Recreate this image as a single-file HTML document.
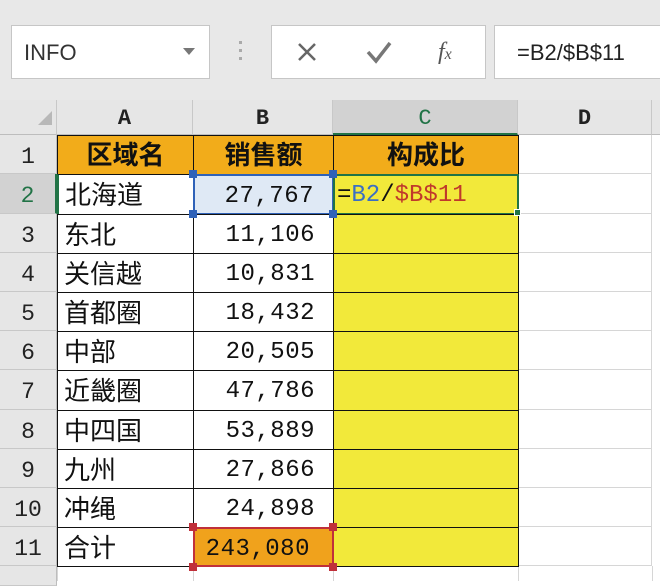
<!DOCTYPE html>
<html><head><meta charset="utf-8"><style>
*{margin:0;padding:0;box-sizing:border-box}
body{width:660px;height:581px;overflow:hidden;background:#fff;position:relative;font-family:"Liberation Sans","Noto Sans CJK SC",sans-serif}
.a{position:absolute}
.top{left:0;top:0;width:660px;height:100px;background:#e8e8e8}
.box{background:#fff;border:1px solid #c6c6c6}
.ch{top:100px;height:35px;background:#e6e6e6;border-right:1px solid #c8c8c8;border-bottom:1px solid #bdbdbd;font-family:"Liberation Mono",monospace;font-weight:bold;font-size:22px;text-align:center;line-height:38px;color:#222}
.rh{left:0;width:57px;background:#e6e6e6;border-bottom:1px solid #c8c8c8;border-right:1px solid #bdbdbd;font-family:"Liberation Mono",monospace;font-size:23px;text-align:center;color:#222}
.c{border:1.5px solid #111;font-size:26px;color:#111;white-space:nowrap;overflow:hidden}
.n{font-family:"Liberation Mono",monospace;font-size:24px;text-align:right;padding-right:18px;letter-spacing:0.5px}
.t{padding-left:6px;font-family:"Liberation Sans","Noto Sans CJK SC",sans-serif}
.g{border-right:1px solid #d6d6d6;border-bottom:1px solid #d6d6d6}
.h{width:8px;height:8px}
</style></head><body>
<div class="a top"></div>
<div class="a box" style="left:11px;top:25px;width:199px;height:54px;font-size:22px;line-height:54px;padding-left:12px;color:#333">INFO</div>
<div class="a" style="left:183px;top:48px;width:0;height:0;border-left:6px solid transparent;border-right:6px solid transparent;border-top:7px solid #777"></div>
<div class="a" style="left:239px;top:41px;width:3px;height:3px;background:#aaa;box-shadow:0 8px 0 #aaa,0 16px 0 #aaa"></div>
<div class="a box" style="left:271px;top:25px;width:215px;height:54px"></div>
<svg class="a" style="left:296px;top:41px" width="22" height="22"><path d="M3 3L19 19M19 3L3 19" stroke="#666" stroke-width="2.5"/></svg>
<svg class="a" style="left:365px;top:40px" width="28" height="24"><path d="M3 12L11 21L25 3" stroke="#777" stroke-width="3.5" fill="none"/></svg>
<div class="a" style="left:438px;top:30px;font-size:24px;color:#555;font-family:'Liberation Serif',serif;font-style:italic;line-height:44px">f<span style="font-size:16px">x</span></div>
<div class="a box" style="left:494px;top:25px;width:170px;height:54px;font-size:22px;line-height:54px;padding-left:22px;color:#222">=B2/$B$11</div>

<div class="a" style="left:0;top:100px;width:57px;height:35px;background:#e6e6e6;border-right:1px solid #c8c8c8;border-bottom:1px solid #bdbdbd"></div>
<div class="a" style="left:38px;top:111px;width:0;height:0;border-left:14px solid transparent;border-bottom:14px solid #b8b8b8"></div>
<div class="a ch" style="left:57px;width:136px">A</div>
<div class="a ch" style="left:193px;width:140px">B</div>
<div class="a ch" style="left:333px;width:185px;background:#d2d2d2;color:#217346;font-weight:normal;border-bottom:2px solid #217346">C</div>
<div class="a ch" style="left:518px;width:134px">D</div>
<div class="a ch" style="left:652px;width:20px"></div>

<div class="a rh" style="top:135px;height:39px;line-height:44px">1</div>
<div class="a rh" style="top:174px;height:40px;line-height:44px;color:#217346;background:#d2d2d2;border-right:2px solid #217346">2</div>
<div class="a rh" style="top:214px;height:39px;line-height:44px">3</div>
<div class="a rh" style="top:253px;height:39px;line-height:44px">4</div>
<div class="a rh" style="top:292px;height:39px;line-height:44px">5</div>
<div class="a rh" style="top:331px;height:39px;line-height:44px">6</div>
<div class="a rh" style="top:370px;height:40px;line-height:44px">7</div>
<div class="a rh" style="top:410px;height:39px;line-height:44px">8</div>
<div class="a rh" style="top:449px;height:39px;line-height:44px">9</div>
<div class="a rh" style="top:488px;height:39px;line-height:44px">10</div>
<div class="a rh" style="top:527px;height:39px;line-height:44px">11</div>
<div class="a rh" style="top:566px;height:20px"></div>

<div class="a g" style="left:518px;top:135px;width:134px;height:39px"></div>
<div class="a g" style="left:518px;top:174px;width:134px;height:40px"></div>
<div class="a g" style="left:518px;top:214px;width:134px;height:39px"></div>
<div class="a g" style="left:518px;top:253px;width:134px;height:39px"></div>
<div class="a g" style="left:518px;top:292px;width:134px;height:39px"></div>
<div class="a g" style="left:518px;top:331px;width:134px;height:39px"></div>
<div class="a g" style="left:518px;top:370px;width:134px;height:40px"></div>
<div class="a g" style="left:518px;top:410px;width:134px;height:39px"></div>
<div class="a g" style="left:518px;top:449px;width:134px;height:39px"></div>
<div class="a g" style="left:518px;top:488px;width:134px;height:39px"></div>
<div class="a g" style="left:518px;top:527px;width:134px;height:39px"></div>
<div class="a" style="left:57px;top:566px;width:603px;height:15px;border-left:1px solid #d6d6d6"></div>
<div class="a" style="left:193px;top:566px;width:1px;height:15px;background:#d6d6d6"></div>
<div class="a" style="left:333px;top:566px;width:1px;height:15px;background:#d6d6d6"></div>
<div class="a" style="left:518px;top:566px;width:1px;height:15px;background:#d6d6d6"></div>
<div class="a" style="left:652px;top:566px;width:1px;height:15px;background:#d6d6d6"></div>

<div class="a c" style="left:57px;top:135px;width:137px;height:40px;background:#f2ac1a;font-weight:bold;text-align:center;line-height:38px">区域名</div>
<div class="a c" style="left:193px;top:135px;width:141px;height:40px;background:#f2ac1a;font-weight:bold;text-align:center;line-height:38px">销售额</div>
<div class="a c" style="left:333px;top:135px;width:186px;height:40px;background:#f2ac1a;font-weight:bold;text-align:center;line-height:38px">构成比</div>

<div class="a c t" style="left:57px;top:174px;width:137px;height:41px;line-height:40px;border-left:2px solid #217346">北海道</div>
<div class="a c n" style="left:193px;top:174px;width:141px;height:41px;line-height:42px;background:#dfe9f5;border:2px solid #2f62b8">27,767</div>
<div class="a c" style="left:333px;top:174px;width:186px;height:41px;line-height:40px;background:#f2e93a;border:2.5px solid #217346;font-family:'Liberation Mono',monospace;font-size:24px;padding-left:2px"><span>=</span><span style="color:#3a6fc4">B2</span><span>/</span><span style="color:#c0392b">$B$11</span></div>

<div class="a c t" style="left:57px;top:214px;width:137px;height:40px;line-height:40px">东北</div>
<div class="a c n" style="left:193px;top:214px;width:141px;height:40px;line-height:42px">11,106</div>
<div class="a c" style="left:333px;top:214px;width:186px;height:40px;background:#f2e93a"></div>

<div class="a c t" style="left:57px;top:253px;width:137px;height:40px;line-height:40px">关信越</div>
<div class="a c n" style="left:193px;top:253px;width:141px;height:40px;line-height:42px">10,831</div>
<div class="a c" style="left:333px;top:253px;width:186px;height:40px;background:#f2e93a"></div>

<div class="a c t" style="left:57px;top:292px;width:137px;height:40px;line-height:40px">首都圈</div>
<div class="a c n" style="left:193px;top:292px;width:141px;height:40px;line-height:42px">18,432</div>
<div class="a c" style="left:333px;top:292px;width:186px;height:40px;background:#f2e93a"></div>

<div class="a c t" style="left:57px;top:331px;width:137px;height:40px;line-height:40px">中部</div>
<div class="a c n" style="left:193px;top:331px;width:141px;height:40px;line-height:42px">20,505</div>
<div class="a c" style="left:333px;top:331px;width:186px;height:40px;background:#f2e93a"></div>

<div class="a c t" style="left:57px;top:370px;width:137px;height:41px;line-height:40px">近畿圈</div>
<div class="a c n" style="left:193px;top:370px;width:141px;height:41px;line-height:42px">47,786</div>
<div class="a c" style="left:333px;top:370px;width:186px;height:41px;background:#f2e93a"></div>

<div class="a c t" style="left:57px;top:410px;width:137px;height:40px;line-height:40px">中四国</div>
<div class="a c n" style="left:193px;top:410px;width:141px;height:40px;line-height:42px">53,889</div>
<div class="a c" style="left:333px;top:410px;width:186px;height:40px;background:#f2e93a"></div>

<div class="a c t" style="left:57px;top:449px;width:137px;height:40px;line-height:40px">九州</div>
<div class="a c n" style="left:193px;top:449px;width:141px;height:40px;line-height:42px">27,866</div>
<div class="a c" style="left:333px;top:449px;width:186px;height:40px;background:#f2e93a"></div>

<div class="a c t" style="left:57px;top:488px;width:137px;height:40px;line-height:40px">冲绳</div>
<div class="a c n" style="left:193px;top:488px;width:141px;height:40px;line-height:42px">24,898</div>
<div class="a c" style="left:333px;top:488px;width:186px;height:40px;background:#f2e93a"></div>

<div class="a c t" style="left:57px;top:527px;width:137px;height:40px;line-height:40px">合计</div>
<div class="a c" style="left:333px;top:527px;width:186px;height:40px;background:#f2e93a"></div>
<div class="a c n" style="left:193px;top:527px;width:141px;height:40px;line-height:42px;background:#f0a21c;border:2.5px solid #c0303a;padding-right:22px">243,080</div>

<div class="a h" style="left:189px;top:170px;background:#2f62b8"></div>
<div class="a h" style="left:329px;top:170px;background:#2f62b8"></div>
<div class="a h" style="left:189px;top:210px;background:#2f62b8"></div>
<div class="a h" style="left:329px;top:210px;background:#2f62b8"></div>
<div class="a h" style="left:514px;top:209px;width:7px;height:7px;background:#217346;border:1px solid #fff"></div>
<div class="a h" style="left:189px;top:523px;background:#c0303a"></div>
<div class="a h" style="left:329px;top:523px;background:#c0303a"></div>
<div class="a h" style="left:189px;top:563px;background:#c0303a"></div>
<div class="a h" style="left:329px;top:563px;background:#c0303a"></div>
</body></html>
